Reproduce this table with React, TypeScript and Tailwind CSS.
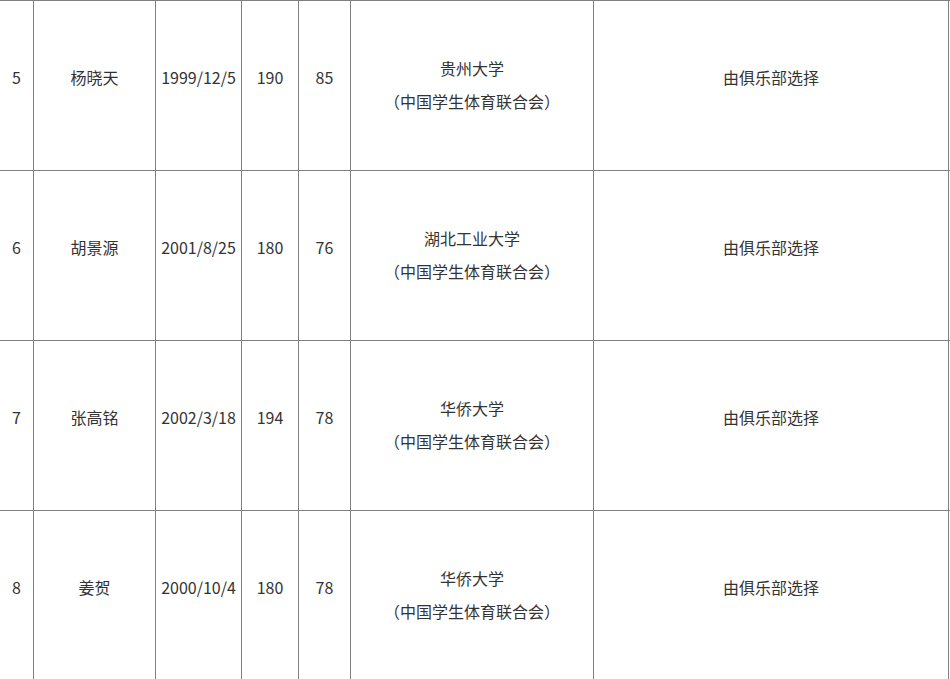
const rows = [
  { no: "5", name: "杨晓天", birth: "1999/12/5", height: "190", weight: "85", school: "贵州大学" },
  { no: "6", name: "胡景源", birth: "2001/8/25", height: "180", weight: "76", school: "湖北工业大学" },
  { no: "7", name: "张高铭", birth: "2002/3/18", height: "194", weight: "78", school: "华侨大学" },
  { no: "8", name: "姜贺", birth: "2000/10/4", height: "180", weight: "78", school: "华侨大学" },
];

const cell = "flex shrink-0 flex-col items-center justify-center border-r border-[#808080] text-center";

function Single({ text, className }: { text: string; className: string }) {
  return (
    <div className={`${cell} ${className}`}>
      <p className="pb-[18px] leading-6">{text}</p>
    </div>
  );
}

export default function App() {
  return (
    <div
      className="w-[950px] bg-white text-[16px] text-[#333333]"
      style={{ fontFamily: '"Noto Sans CJK SC", "Noto Sans", sans-serif' }}
    >
      {rows.map((r) => (
        <div key={r.no} className="flex h-[170px] border-t border-[#808080]">
          <Single text={r.no} className="w-[34px]" />
          <Single text={r.name} className="w-[122px]" />
          <Single text={r.birth} className="w-[86px]" />
          <Single text={r.height} className="w-[57px]" />
          <Single text={r.weight} className="w-[52px]" />
          <div className={`${cell} w-[243px]`}>
            <p className="leading-[33px]">{r.school}</p>
            <p className="pb-[2px] leading-[33px]">（中国学生体育联合会）</p>
          </div>
          <Single text="由俱乐部选择" className="w-[355px]" />
        </div>
      ))}
    </div>
  );
}
